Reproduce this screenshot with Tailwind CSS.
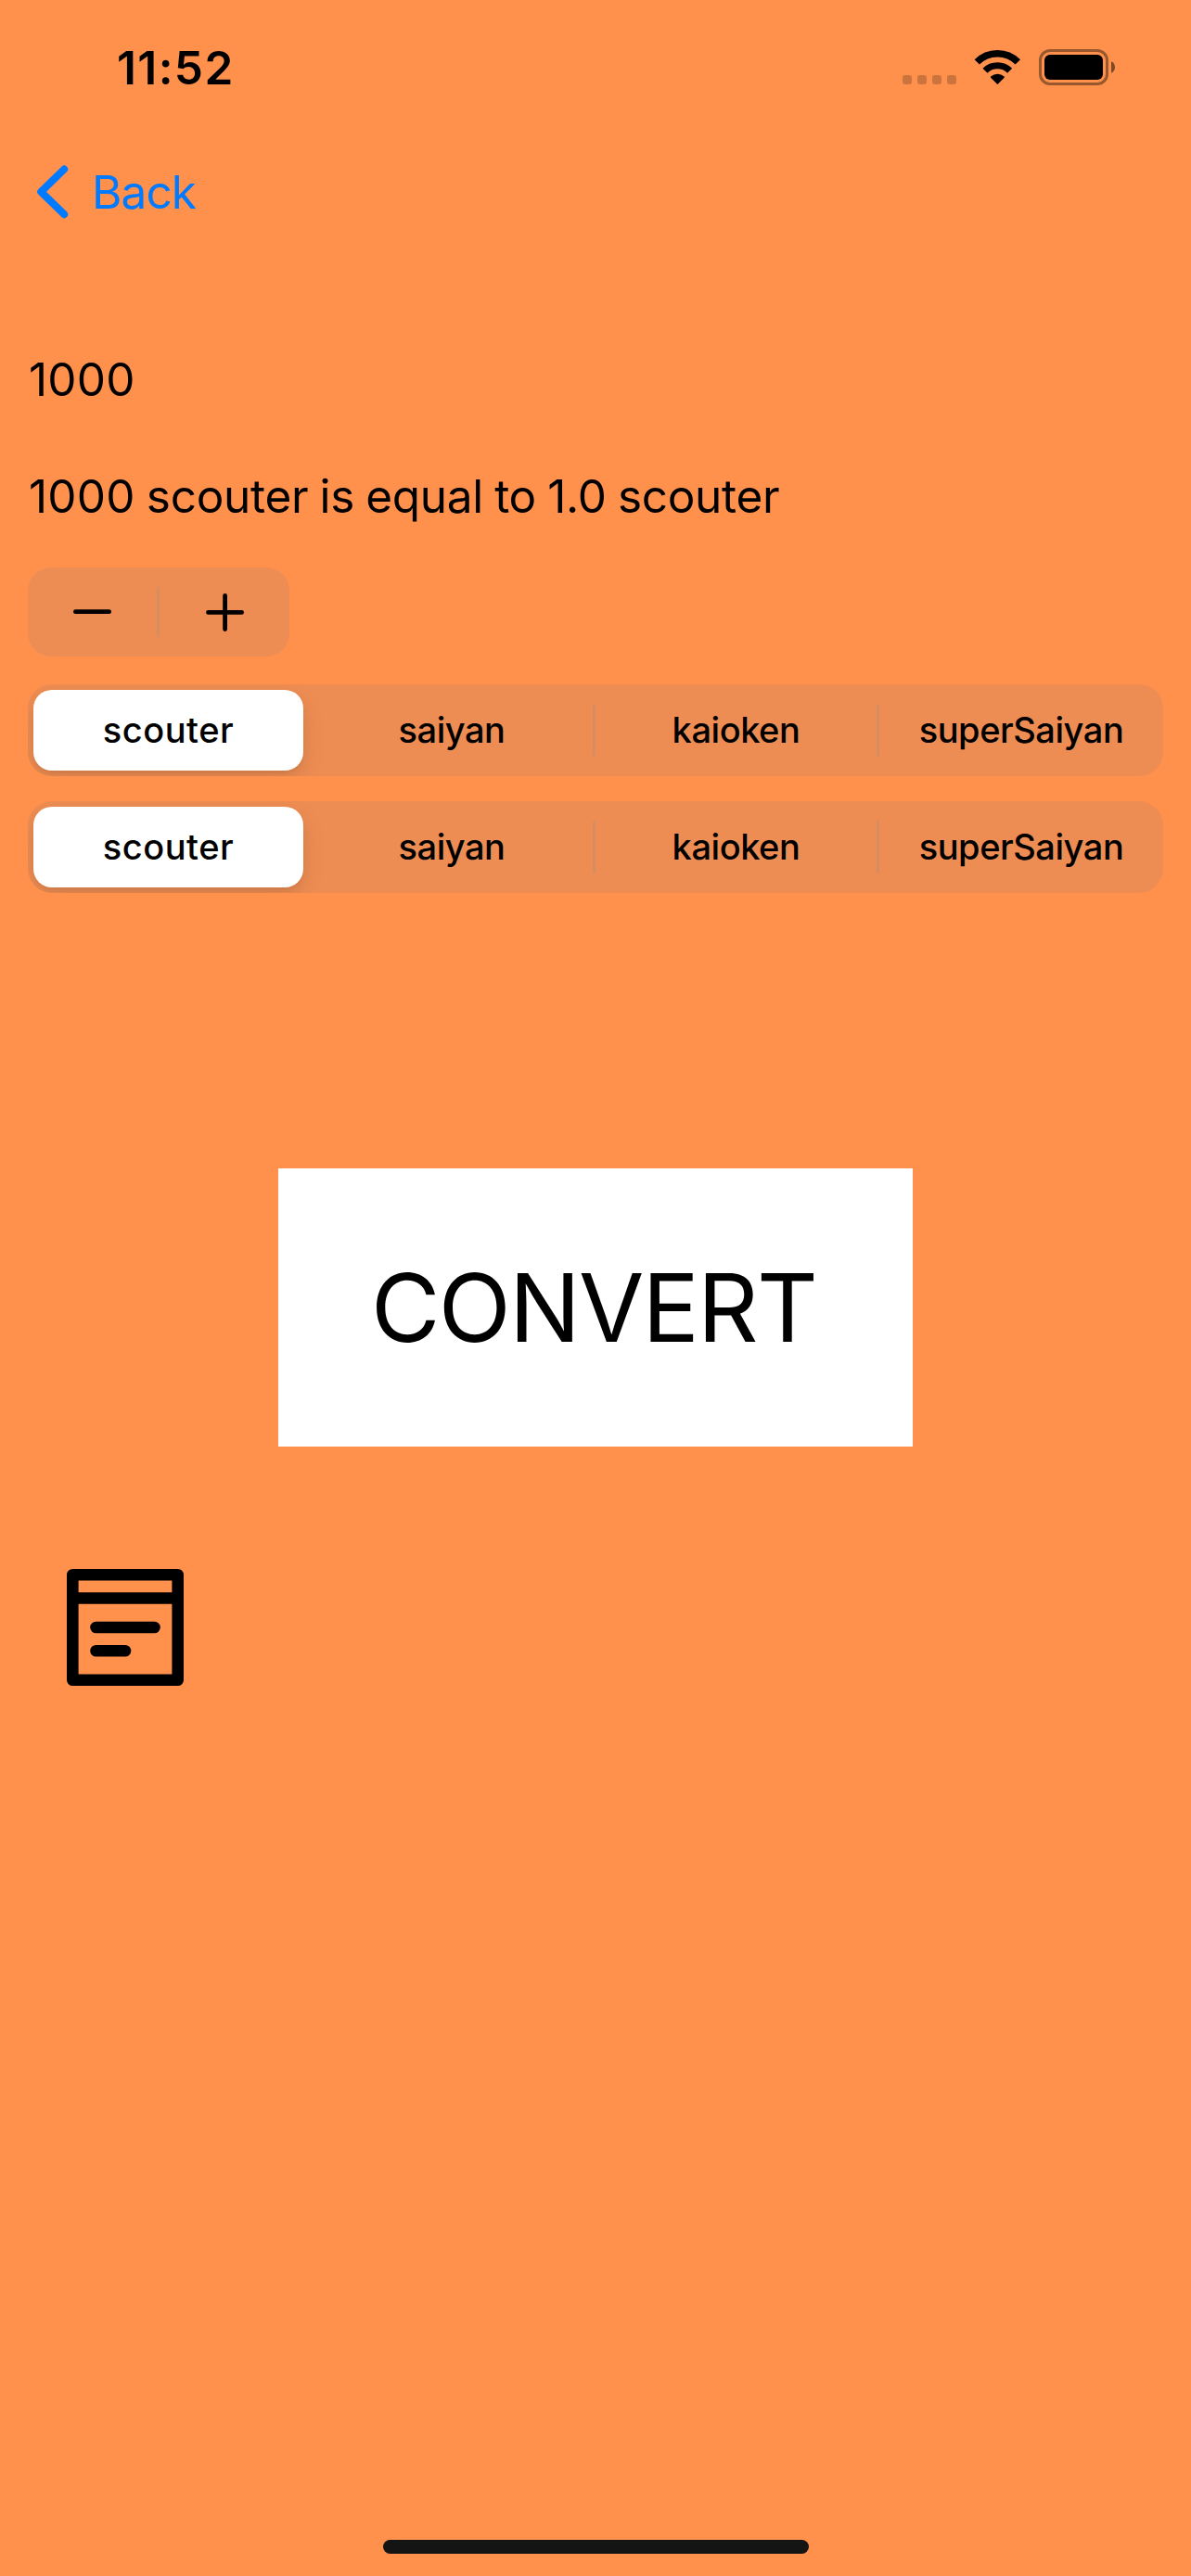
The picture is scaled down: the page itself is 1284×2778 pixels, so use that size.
<!DOCTYPE html>
<html lang="en">
<head>
<meta charset="utf-8">
<title>Convert</title>
<script src="https://cdn.jsdelivr.net/npm/@tailwindcss/browser@4"></script>
</head>
<body class="flex h-[2778px] w-[1284px] flex-col overflow-hidden bg-[#ff914d] font-[Inter,sans-serif] text-[49.5px] text-black">
  <!-- Status bar -->
  <header class="flex h-[141px] shrink-0 justify-between pl-[126px] pr-[81px]">
    <div class="mt-[43px] h-[60px] text-[49.5px] leading-[60px] font-semibold tracking-[1.4px]">11:52</div>
    <div class="flex">
      <div class="mt-[81px] flex gap-[6px]">
        <i class="size-[10px] rounded-[3px] bg-black/20"></i>
        <i class="size-[10px] rounded-[3px] bg-black/20"></i>
        <i class="size-[10px] rounded-[3px] bg-black/20"></i>
        <i class="size-[10px] rounded-[3px] bg-black/20"></i>
      </div>
      <svg class="mt-[53px] ml-[19px] h-[40px] w-[51px]" viewBox="0 0 51 40" fill="none">
        <path d="M3.4 14.2A31 31 0 0 1 47.4 14.2" transform="translate(-.1 -.3)" stroke="#000" stroke-width="7.6"/>
        <path d="M12.1 23.2A19 19 0 0 1 38.7 23.2" transform="translate(-.1 0)" stroke="#000" stroke-width="7.2"/>
        <path d="M25.4 38L18.3 30.9Q17.5 30 18.4 29.3A11 11 0 0 1 32.4 29.3Q33.3 30 32.5 30.9Z" fill="#000"/>
      </svg>
      <svg class="mt-[53px] ml-[19px] h-[40px] w-[83px]" viewBox="0 0 83 40" fill="none">
        <rect x="1.5" y="1.5" width="72" height="36" rx="10.5" stroke="#000" stroke-opacity=".4" stroke-width="3"/>
        <rect x="6" y="6" width="63" height="27" rx="6" fill="#000"/>
        <path d="M78 13.3C80.6 14.4 82 16.7 82 19.5S80.6 24.6 78 25.7Z" fill="#000" fill-opacity=".5"/>
      </svg>
    </div>
  </header>

  <!-- Navigation bar -->
  <nav class="flex h-[132px] shrink-0 items-center pl-[36px] text-[#007aff]">
    <svg class="h-[66px] w-[42px]" viewBox="0 0 42 66" fill="none" stroke="#007aff" stroke-width="8" stroke-linecap="round" stroke-linejoin="round"><path d="M33.2 8.5L8.2 32.8L33.2 57.2"/></svg>
    <span class="ml-[21px] leading-[60px] tracking-[-.9px]">Back</span>
  </nav>

  <main class="flex flex-col px-[30px]">
    <div class="mt-[106px] h-[60px] pl-px leading-[60px] tracking-[.2px]">1000</div>
    <div class="mt-[66px] h-[60px] pl-px leading-[60px] tracking-[-.3px] [word-spacing:-1.4px] whitespace-nowrap"><span class="tracking-[.2px]">1000</span> scouter is equal to 1.0 scouter</div>

    <!-- Stepper -->
    <div class="mt-[47px] flex h-[96px] w-[282px] items-center rounded-[25px] bg-[#767680]/12">
      <svg class="h-[50px] w-[139px]" viewBox="0 0 139 50" stroke="#000" stroke-width="4.8" stroke-linecap="round"><path d="M51.4 24.7H87.6"/></svg>
      <i class="h-[54px] w-[3px] rounded-full bg-[#8e8e93]/24"></i>
      <svg class="h-[50px] w-[140px]" viewBox="0 0 140 50" stroke="#000" stroke-width="4.8" stroke-linecap="round"><path d="M52.5 25.4H88.6M70.6 7.4V43.5"/></svg>
    </div>

    <!-- Unit pickers -->
    <div class="mt-[30px] flex h-[99px] items-center overflow-hidden rounded-[26px] bg-[#767680]/12 pl-[6px] text-[38px] leading-[46px] font-medium tracking-[-.45px]">
      <div class="flex h-[87px] w-[291px] items-center justify-center rounded-[20px] bg-white pb-[2px] tracking-[.55px] shadow-[0_9px_24px_rgba(0,0,0,0.12),0_3px_3px_rgba(0,0,0,0.04)]">scouter</div>
      <div class="ml-[8px] w-[304px] pb-[2px] text-center">saiyan</div>
      <i class="h-[57px] w-[3px] rounded-full bg-[#8e8e93]/24"></i>
      <div class="w-[303px] pb-[2px] text-center">kaioken</div>
      <i class="h-[57px] w-[3px] rounded-full bg-[#8e8e93]/24"></i>
      <div class="w-[306px] pb-[2px] text-center">superSaiyan</div>
    </div>
    <div class="mt-[27px] flex h-[99px] items-center overflow-hidden rounded-[26px] bg-[#767680]/12 pl-[6px] text-[38px] leading-[46px] font-medium tracking-[-.45px]">
      <div class="flex h-[87px] w-[291px] items-center justify-center rounded-[20px] bg-white pb-[2px] tracking-[.55px] shadow-[0_9px_24px_rgba(0,0,0,0.12),0_3px_3px_rgba(0,0,0,0.04)]">scouter</div>
      <div class="ml-[8px] w-[304px] pb-[2px] text-center">saiyan</div>
      <i class="h-[57px] w-[3px] rounded-full bg-[#8e8e93]/24"></i>
      <div class="w-[303px] pb-[2px] text-center">kaioken</div>
      <i class="h-[57px] w-[3px] rounded-full bg-[#8e8e93]/24"></i>
      <div class="w-[306px] pb-[2px] text-center">superSaiyan</div>
    </div>

    <button class="mt-[297px] flex h-[300px] w-[684px] items-center self-center bg-white pl-[100px] text-[102px] leading-[120px] tracking-[-1.8px]">CONVERT</button>

    <svg class="mt-[132px] ml-[42px] size-[126px]" viewBox="0 0 10 10" fill="none" stroke="#000" stroke-linejoin="round" stroke-linecap="round">
      <path d="M.5 .5H9.5V9.5H.5ZM.5 2.5H9.5M2.5 5H7.5M2.5 7H5"/>
    </svg>
  </main>

  <div class="mt-auto mb-[24px] ml-[413px] h-[15px] w-[459px] shrink-0 rounded-full bg-[#141414]"></div>
</body>
</html>
